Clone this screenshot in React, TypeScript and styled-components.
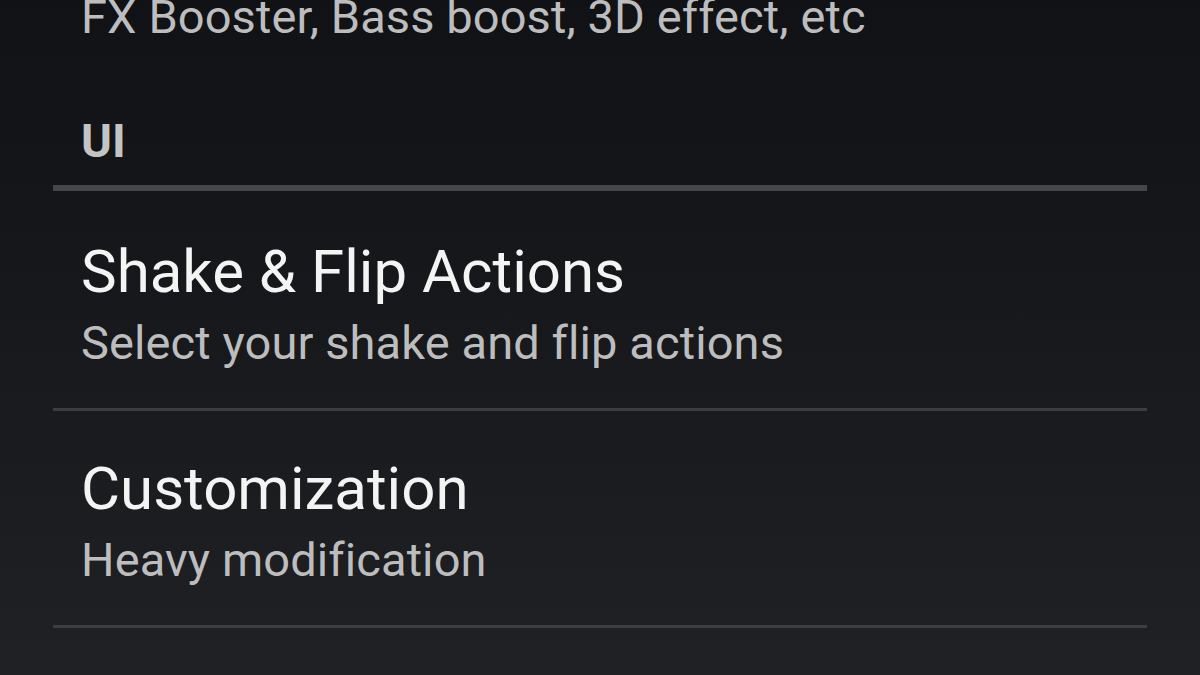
import styled, { createGlobalStyle } from "styled-components";

const GlobalStyle = createGlobalStyle`
  html, body {
    margin: 0;
    padding: 0;
    background: #111316;
  }
  body {
    font-family: Roboto, "Noto Sans", sans-serif;
    font-variant-ligatures: none;
    -webkit-font-smoothing: antialiased;
  }
`;

type Pref = { title?: string; summary: string };
type Section = { category?: string; items: Pref[] };

// the list is scrolled: the first preference only shows its summary line
const sections: Section[] = [
  {
    items: [{ summary: "FX Booster, Bass boost, 3D effect, etc" }],
  },
  {
    category: "UI",
    items: [
      { title: "Shake & Flip Actions", summary: "Select your shake and flip actions" },
      { title: "Customization", summary: "Heavy modification" },
    ],
  },
];

const App = () => {
  return (
    <>
      <GlobalStyle />
      <Screen>
        <List>
          {sections.map((section, si) => {
            const nextHasCategory = !!sections[si + 1]?.category;
            return (
              <div key={si}>
                {section.category && <Category>{section.category}</Category>}
                {section.items.map((item, i) => (
                  <Item
                    key={item.summary}
                    $divider={!(nextHasCategory && i === section.items.length - 1)}
                  >
                    {item.title && <Title>{item.title}</Title>}
                    <Summary>{item.summary}</Summary>
                  </Item>
                ))}
              </div>
            );
          })}
        </List>
      </Screen>
    </>
  );
};

export default App;

const Screen = styled.div`
  width: 1200px;
  height: 675px;
  overflow: hidden;
  background: linear-gradient(to bottom, #101215 0%, #16181b 45%, #1f2125 100%);
`;

const List = styled.div`
  margin: -54px 53px 0 53px;
`;

const Category = styled.div`
  padding: 31px 0 17px 28px;
  line-height: 55px;
  font-size: 47px;
  font-weight: 700;
  color: #c4c4c4;
  border-bottom: 6px solid #43474a;
  margin-bottom: 3px;
`;

const Item = styled.div<{ $divider: boolean }>`
  display: flex;
  flex-direction: column;
  gap: 8px;
  padding: 43px 0 38px 28px;
  border-bottom: ${({ $divider }) => ($divider ? "3px solid #3b3e41" : "none")};
`;

const Title = styled.div`
  font-size: 60px;
  line-height: 70px;
  color: #f4f4f4;
  white-space: nowrap;
`;

const Summary = styled.div`
  font-size: 47px;
  line-height: 55px;
  letter-spacing: 0.1px;
  color: #bdbdbd;
  white-space: nowrap;
`;
